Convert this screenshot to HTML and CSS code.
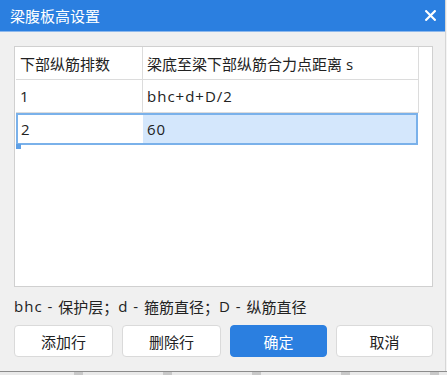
FILE: index.html
```html
<!DOCTYPE html>
<html lang="zh">
<head>
<meta charset="utf-8">
<title>梁腹板高设置</title>
<link rel="stylesheet" href="styles.css">
</head>
<body>
<div class="dialog">
  <div class="titlebar">
    <span class="title">梁腹板高设置</span>
    <svg class="close" width="11" height="11" viewBox="0 0 11 11"><path d="M1.2 1.2 L9.8 9.8 M9.8 1.2 L1.2 9.8" stroke="#fff" stroke-width="2.2" stroke-linecap="square"/></svg>
  </div>
  <div class="content">
    <div class="table">
      <div class="row header">
        <div class="cell c1">下部纵筋排数</div>
        <div class="cell c2">梁底至梁下部纵筋合力点距离 s</div>
      </div>
      <div class="row">
        <div class="cell c1 latin">1</div>
        <div class="cell c2 latin">bhc+d+D/2</div>
      </div>
      <div class="row selected">
        <div class="cell c1 latin">2</div>
        <div class="cell c2 latin">60</div>
        <span class="handle"></span>
      </div>
    </div>
    <div class="note"><span class="latin">bhc - </span>保护层；<span class="latin">d - </span>箍筋直径；<span class="latin">D - </span>纵筋直径</div>
    <div class="buttons">
      <button class="btn">添加行</button>
      <button class="btn">删除行</button>
      <button class="btn primary">确定</button>
      <button class="btn">取消</button>
    </div>
  </div>
</div>
<div class="under">
  <span></span><span></span><span></span><span></span><span></span>
</div>
</body>
</html>
```

FILE: styles.css
```css
html, body {
  margin: 0;
  padding: 0;
  background: #f4f4f4;
}
body {
  width: 447px;
  height: 375px;
  overflow: hidden;
  font-family: "Open Sans", "Noto Sans CJK SC", sans-serif;
  color: #222;
}
.dialog {
  width: 445px;
  height: 371px;
  background: #f0f0f0;
  display: flex;
  flex-direction: column;
  box-shadow: 1px 0 0 #d6d6d6;
}
.titlebar {
  height: 32px;
  background: #2b7fe0;
  display: flex;
  align-items: center;
  justify-content: space-between;
  padding: 0 9px 0 10px;
  border-bottom: 1px solid #8db8ec;
  box-sizing: border-box;
}
.title {
  color: #fff;
  font-size: 15px;
  font-family: "Noto Sans CJK SC", sans-serif;
}
.close {
  display: block;
}
.content {
  flex: 1;
  padding: 14px 12px 0 14px;
  display: flex;
  flex-direction: column;
}
.table {
  height: 241px;
  box-sizing: border-box;
  border: 1px solid #d0d0d0;
  background: #fff;
  padding: 0 14px 0 1px;
  font-size: 15px;
}
.latin {
  letter-spacing: 1px;
}
.row {
  display: grid;
  grid-template-columns: 127px 276px;
  height: 33px;
  position: relative;
}
.cell {
  display: flex;
  align-items: center;
  padding-left: 4px;
  box-sizing: border-box;
  border-right: 1px solid #dcdcdc;
  border-bottom: 1px solid #dcdcdc;
}
.row.selected {
  height: 32px;
  outline: 2px solid #7ab1ea;
  outline-offset: -2px;
}
.row.selected .cell {
  border: none;
  padding-left: 5px;
}
.row.selected .c2 {
  background: #d4e7fc;
  margin: 2px 2px 2px 0;
  padding-left: 4px;
}
.handle {
  position: absolute;
  left: 0;
  bottom: -4px;
  width: 5px;
  height: 5px;
  background: #5fa0e6;
}
.note {
  font-size: 15px;
  height: 38px;
  display: flex;
  align-items: center;
  white-space: pre;
  color: #222;
}
.buttons {
  display: grid;
  grid-template-columns: 99px 99px 97px 97px;
  column-gap: 9px;
}
.btn {
  height: 32px;
  font-family: "Noto Sans CJK SC", sans-serif;
  font-size: 15px;
  color: #222;
  background: #fff;
  border: 1px solid #dadada;
  border-radius: 4px;
}
.btn.primary {
  background: #2b7fe0;
  border-color: #2b7fe0;
  color: #fff;
}
.under {
  height: 4px;
  background: #eaeaea;
  border-top: 1px solid #8c8c8c;
  display: flex;
  padding-left: 74px;
  gap: 80px;
}
.under span {
  width: 9px;
  height: 4px;
  background: #c8c8c8;
}
```
